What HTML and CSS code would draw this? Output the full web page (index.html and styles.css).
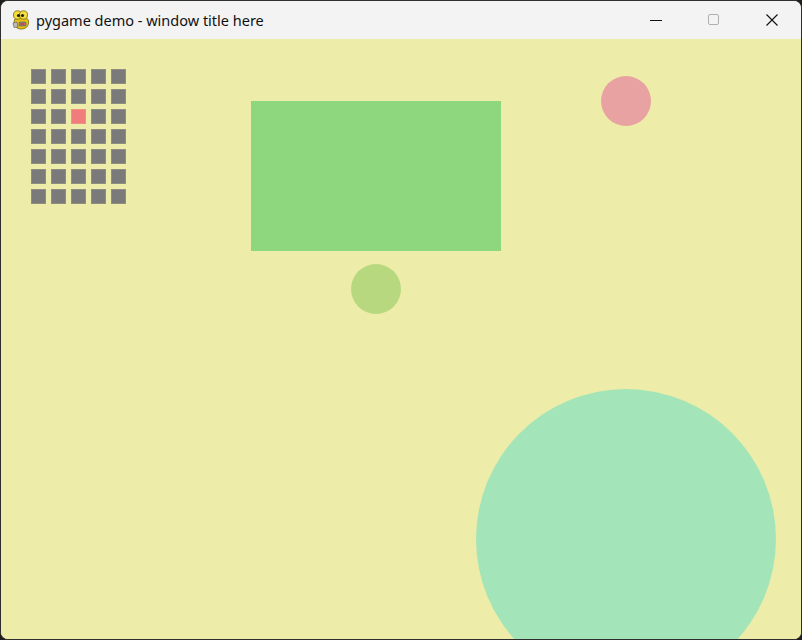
FILE: index.html
```html
<!DOCTYPE html>
<html>
<head>
<meta charset="utf-8">
<link rel="stylesheet" href="styles.css">
</head>
<body>
<div class="window">
  <div class="titlebar">
    <svg class="app-icon" width="18" height="20" viewBox="0 0 18 20">
      <path d="M3 9 C1 12 2 18 8 19 C14 19.5 17 16 16.5 11 C16 8 13 7 10 8 Z" fill="#e6c21a" stroke="#7a6400" stroke-width="0.8"/>
      <ellipse cx="5.5" cy="5" rx="4" ry="4.2" fill="#f5e040" stroke="#7a6400" stroke-width="0.8"/>
      <ellipse cx="11.5" cy="5" rx="4" ry="4.2" fill="#f5e040" stroke="#7a6400" stroke-width="0.8"/>
      <circle cx="6.5" cy="5.5" r="1.6" fill="#222"/>
      <circle cx="10.5" cy="5.5" r="1.6" fill="#222"/>
      <path d="M1 13 L5 12 L6 17 L2 17.5 Z" fill="#bdbdbd" stroke="#555" stroke-width="0.6"/>
      <rect x="7" y="12" width="7" height="4" rx="1" fill="#8a8a8a" stroke="#444" stroke-width="0.5"/>
      <rect x="8.5" y="13" width="4" height="2" fill="#d04848"/>
    </svg>
    <span class="title">pygame demo - window title here</span>
    <div class="controls">
      <div class="ctl">
        <svg width="12" height="12" viewBox="0 0 12 12"><path d="M0 6.5H12" stroke="#111" stroke-width="1"/></svg>
      </div>
      <div class="ctl">
        <svg width="12" height="12" viewBox="0 0 12 12"><rect x="0.5" y="0.5" width="10" height="10" rx="1.5" fill="none" stroke="#b0b0b0" stroke-width="1"/></svg>
      </div>
      <div class="ctl">
        <svg width="12" height="12" viewBox="0 0 12 12"><path d="M0.5 0.5L11.5 11.5M11.5 0.5L0.5 11.5" stroke="#111" stroke-width="1.1"/></svg>
      </div>
    </div>
  </div>
  <div class="canvas">
    <div class="grid">
      <div class="cell"></div><div class="cell"></div><div class="cell"></div><div class="cell"></div><div class="cell"></div>
      <div class="cell"></div><div class="cell"></div><div class="cell"></div><div class="cell"></div><div class="cell"></div>
      <div class="cell"></div><div class="cell"></div><div class="cell red"></div><div class="cell"></div><div class="cell"></div>
      <div class="cell"></div><div class="cell"></div><div class="cell"></div><div class="cell"></div><div class="cell"></div>
      <div class="cell"></div><div class="cell"></div><div class="cell"></div><div class="cell"></div><div class="cell"></div>
      <div class="cell"></div><div class="cell"></div><div class="cell"></div><div class="cell"></div><div class="cell"></div>
      <div class="cell"></div><div class="cell"></div><div class="cell"></div><div class="cell"></div><div class="cell"></div>
    </div>
    <div class="rect"></div>
    <div class="circle pink"></div>
    <div class="circle lime"></div>
    <div class="circle mint"></div>
  </div>
</div>
</body>
</html>
```
FILE: styles.css
```css
html, body {
  margin: 0;
  padding: 0;
  width: 802px;
  height: 640px;
  overflow: hidden;
  background: #1f1f1f;
}
.window {
  box-sizing: border-box;
  width: 802px;
  height: 640px;
  border: 1px solid #2e2e2e;
  border-radius: 8px;
  overflow: hidden;
  display: flex;
  flex-direction: column;
  background: #eeeca9;
}
.titlebar {
  height: 38px;
  flex: none;
  background: #f3f3f3;
  display: flex;
  align-items: center;
  font-family: "Noto Sans", "Open Sans", sans-serif;
  font-size: 14.5px;
  color: #111;
}
.app-icon {
  margin-left: 11px;
  margin-right: 6px;
  margin-top: -1px;
}
.title {
  flex: 1;
}
.controls {
  display: flex;
  height: 100%;
}
.ctl {
  width: 58px;
  height: 100%;
  display: flex;
  align-items: center;
  justify-content: center;
}
.canvas {
  position: relative;
  flex: 1;
  background: #eeeca9;
  overflow: hidden;
}
.grid {
  position: absolute;
  left: 30px;
  top: 30px;
  display: grid;
  grid-template-columns: repeat(5, 15px);
  grid-auto-rows: 15px;
  gap: 5px;
}
.cell {
  box-sizing: border-box;
  background: #7a7a7a;
  border: 1px solid #8e8e80;
}
.cell.red {
  background: #f07c7c;
  border-color: #f09088;
}
.rect {
  position: absolute;
  left: 250px;
  top: 62px;
  width: 250px;
  height: 150px;
  background: #8ed77f;
}
.circle {
  position: absolute;
  border-radius: 50%;
}
.pink {
  left: 600px;
  top: 37px;
  width: 50px;
  height: 50px;
  background: #e8a2a2;
}
.lime {
  left: 350px;
  top: 225px;
  width: 50px;
  height: 50px;
  background: #b8d880;
}
.mint {
  left: 475px;
  top: 350px;
  width: 300px;
  height: 300px;
  background: #a3e5b8;
}
```
